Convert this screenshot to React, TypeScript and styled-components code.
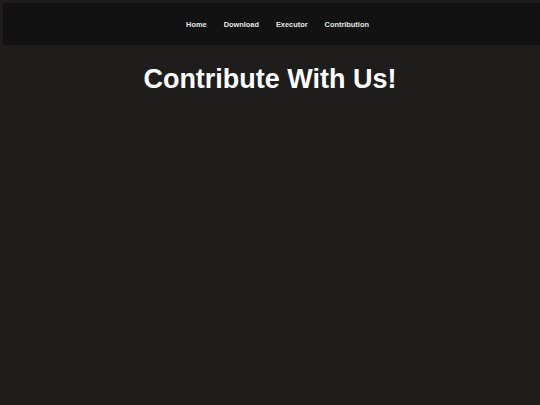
import React from "react";
import styled, { createGlobalStyle } from "styled-components";

const Global = createGlobalStyle`
  html, body { margin: 0; padding: 0; background: #1e1d1c; height: 100%; }
  body { font-family: "Liberation Sans", Arial, sans-serif; }
`;

const Page = styled.div`
  min-height: 405px;
  background: #1e1d1c;
  padding-top: 3px;
  box-sizing: border-box;
`;

const Nav = styled.nav`
  height: 42px;
  margin-left: 3px;
  background: #121212;
  display: flex;
  align-items: center;
  justify-content: center;
  gap: 17px;
  padding-left: 12px;
`;

const NavLink = styled.a`
  color: #e6e6e6;
  font-size: 7.4px;
  font-weight: bold;
  text-decoration: none;
`;

const Title = styled.h1`
  margin: 19px 0 0;
  text-align: center;
  color: #ffffff;
  font-size: 27px;
  font-weight: bold;
  line-height: 31px;
`;

export default function App() {
  return (
    <>
      <Global />
      <Page>
        <Nav>
          <NavLink href="#">Home</NavLink>
          <NavLink href="#">Download</NavLink>
          <NavLink href="#">Executor</NavLink>
          <NavLink href="#">Contribution</NavLink>
        </Nav>
        <Title>Contribute With Us!</Title>
      </Page>
    </>
  );
}
